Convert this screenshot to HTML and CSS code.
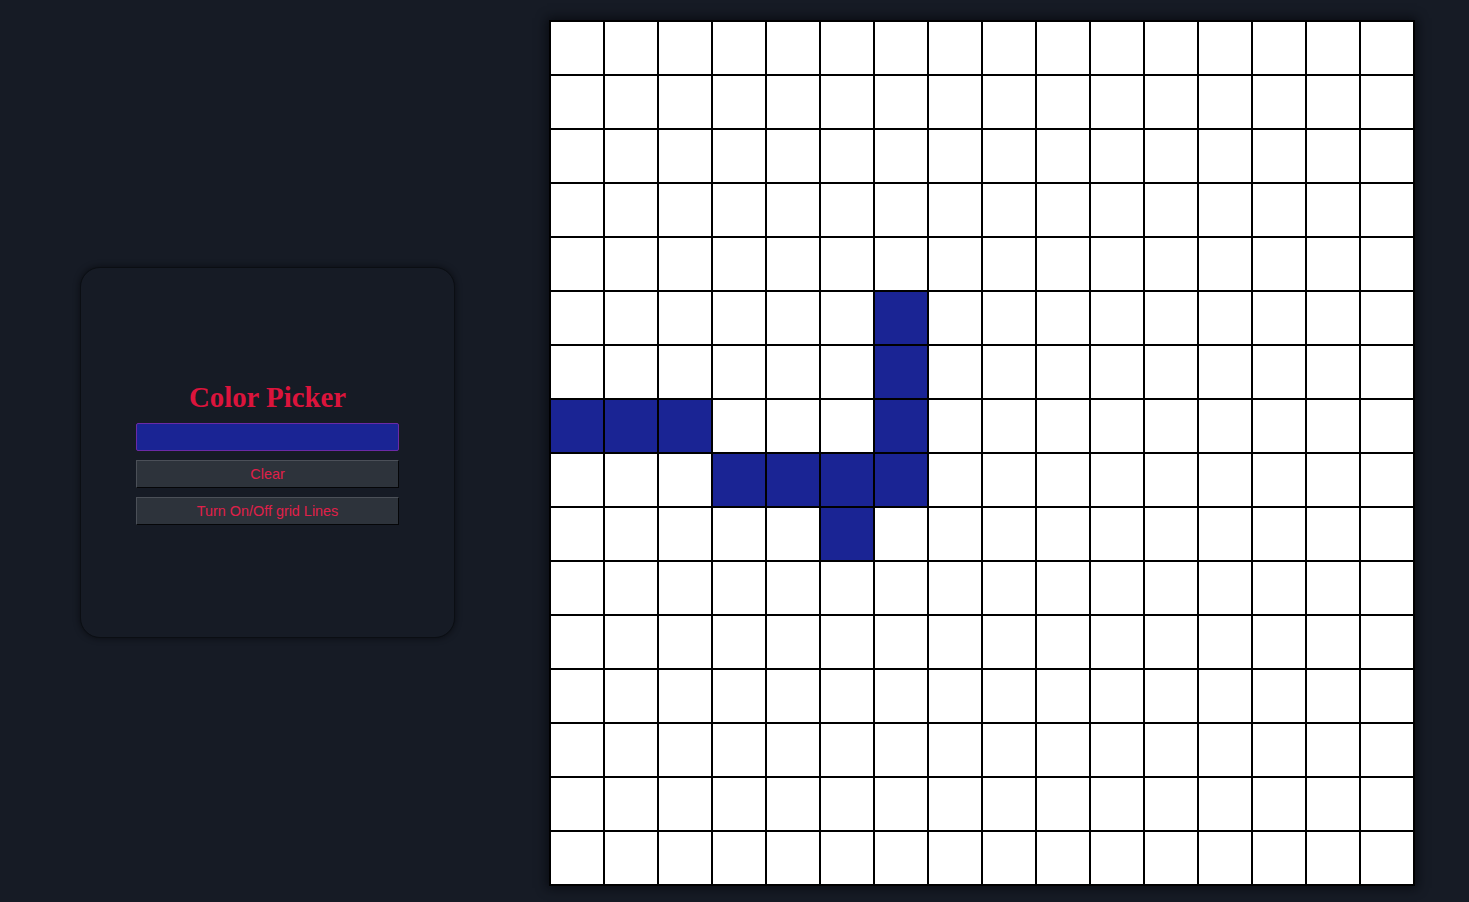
FILE: index.html
```html
<!DOCTYPE html>
<html lang="en">
<head>
<meta charset="utf-8">
<title>Color Picker</title>
<link rel="stylesheet" href="styles.css">
</head>
<body>
<div class="panel">
  <h1 class="title">Color Picker</h1>
  <div class="swatch"></div>
  <button class="btn">Clear</button>
  <button class="btn">Turn On/Off grid Lines</button>
</div>
<div class="grid" id="grid"></div>
<script src="script.js"></script>
</body>
</html>
```

FILE: styles.css
```css
html, body {
  margin: 0;
  padding: 0;
}
body {
  background: #161b25;
  height: 902px;
  display: flex;
  align-items: center;
  padding-left: 80px;
  gap: 94px;
  box-sizing: border-box;
  font-family: "Liberation Sans", Arial, sans-serif;
}
.panel {
  width: 375px;
  height: 371px;
  margin-top: 3px;
  box-sizing: border-box;
  background: #161b25;
  border: 1px solid #0b0e13;
  border-radius: 20px;
  box-shadow: 0 0 6px rgba(5, 7, 10, 0.7);
  display: flex;
  flex-direction: column;
  align-items: center;
  justify-content: center;
}
.title {
  font-family: "Liberation Serif", "Times New Roman", serif;
  font-weight: bold;
  font-size: 28.8px;
  line-height: 32px;
  color: #dc143c;
  margin: 0 0 10px 0;
}
.swatch {
  width: 263px;
  height: 28px;
  box-sizing: border-box;
  background: #1a2494;
  border: 1px solid #6b2aa6;
  border-radius: 2px;
  margin-bottom: 9px;
}
.btn {
  width: 263px;
  height: 28px;
  box-sizing: border-box;
  background: #2d333b;
  color: #e0204a;
  font-family: "Liberation Sans", Arial, sans-serif;
  font-size: 14.4px;
  border-width: 1px;
  border-style: solid;
  border-color: #4b5058 #050608 #050608 #4b5058;
  padding: 0;
  margin: 0 0 9px 0;
}
.btn:last-child {
  margin-bottom: 0;
}
.grid {
  display: grid;
  grid-template-columns: repeat(16, 54px);
  grid-auto-rows: 54px;
  margin-top: 4px;
  border: 1px solid #000;
  background: #fff;
  box-shadow: 0 0 10px 2px rgba(6, 8, 12, 0.8);
}
.cell {
  border: 1px solid #000;
  background: #fff;
}
.cell.on {
  background: #1a2494;
}
```

FILE: script.js
```js
var grid = document.getElementById('grid');
var on = {'5,6':1,'6,6':1,'7,0':1,'7,1':1,'7,2':1,'7,6':1,'8,3':1,'8,4':1,'8,5':1,'8,6':1,'9,5':1};
for (var r = 0; r < 16; r++) {
  for (var c = 0; c < 16; c++) {
    var d = document.createElement('div');
    d.className = 'cell' + (on[r + ',' + c] ? ' on' : '');
    grid.appendChild(d);
  }
}
```
